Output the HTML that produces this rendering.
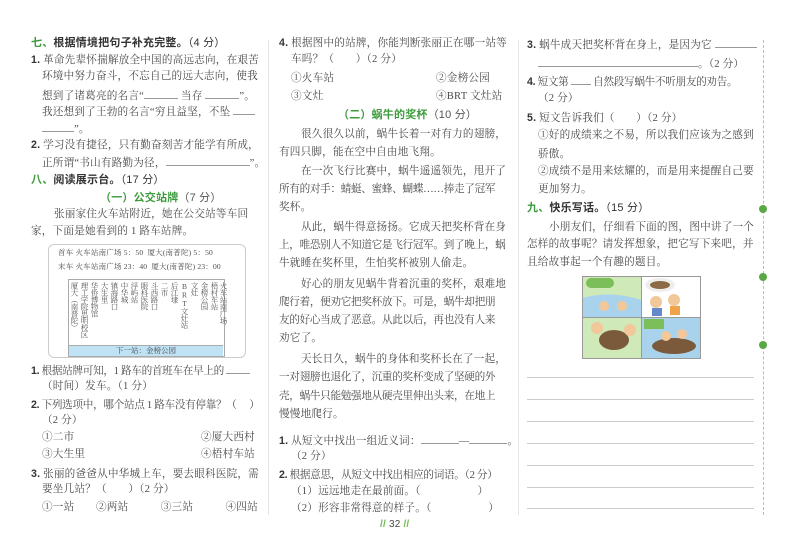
<!DOCTYPE html>
<html><head><meta charset="utf-8"><style>
html,body{margin:0;padding:0;background:#fff;}
body{width:800px;height:550px;position:relative;overflow:hidden;font-family:"Liberation Serif","Noto Serif CJK SC","Noto Sans CJK SC",serif;color:#4a4a4a;}
.t{position:absolute;font-size:10.6px;line-height:14px;white-space:nowrap;letter-spacing:0.2px;}
.k{letter-spacing:-0.3px;}
.h{font-family:"Liberation Sans","Noto Sans CJK SC",sans-serif;font-weight:bold;color:#333;font-size:11px;}
.g{color:#3d9b3d;}
.n{font-family:"Liberation Sans",sans-serif;font-weight:bold;color:#333;}
.u{display:inline-block;border-bottom:1px solid #999;height:10px;vertical-align:baseline;}
.ln{position:absolute;left:527px;width:227px;height:1px;background:#ccc;}
.vc{position:absolute;top:282px;writing-mode:vertical-rl;text-orientation:upright;font-size:7.5px;line-height:9px;color:#555;letter-spacing:-0.5px;}
</style></head><body>
<div style="position:absolute;left:268px;top:40px;width:1px;height:475px;background:#e4e4e4"></div>
<div style="position:absolute;left:518px;top:40px;width:1px;height:475px;background:#e4e4e4"></div>
<div style="position:absolute;left:763px;top:40px;width:0;height:475px;border-left:1px dashed #bbb"></div>
<div style="position:absolute;left:759px;top:205px;width:8px;height:8px;border-radius:50%;background:#5aa845"></div>
<div style="position:absolute;left:759px;top:273px;width:8px;height:8px;border-radius:50%;background:#5aa845"></div>
<div style="position:absolute;left:759px;top:341px;width:8px;height:8px;border-radius:50%;background:#5aa845"></div>

<!-- left column -->
<div class="t h" style="left:31px;top:36px"><span class="g">七、</span>根据情境把句子补充完整。<span style="font-weight:normal">（4 分）</span></div>
<div class="t" style="left:31px;top:53px"><span class="n">1.</span> 革命先辈怀揣解放全中国的高远志向，在艰苦</div>
<div class="t" style="left:42px;top:70px">环境中努力奋斗，不忘自己的远大志向，使我</div>
<div class="t" style="left:42px;top:88px">想到了诸葛亮的名言“<span class="u" style="width:34px"></span> 当存 <span class="u" style="width:34px"></span>”。</div>
<div class="t" style="left:42px;top:104px">我还想到了王勃的名言“穷且益坚，不坠 <span class="u" style="width:22px"></span></div>
<div class="t" style="left:42px;top:121px"><span class="u" style="width:32px"></span>”。</div>
<div class="t" style="left:31px;top:138px"><span class="n">2.</span> 学习没有捷径，只有勤奋刻苦才能学有所成，</div>
<div class="t" style="left:42px;top:155px">正所谓“书山有路勤为径，<span class="u" style="width:84px"></span>”。</div>
<div class="t h" style="left:31px;top:173px"><span class="g">八、</span>阅读展示台。<span style="font-weight:normal">（17 分）</span></div>
<div class="t h" style="left:100px;top:191px;color:#3d9b3d">（一）公交站牌<span style="font-weight:normal;color:#555">（7 分）</span></div>
<div class="t" style="left:54px;top:208px">张丽家住火车站附近，她在公交站等车回</div>
<div class="t" style="left:31px;top:225px">家，下面是她看到的 1 路车站牌。</div>
<div style="position:absolute;left:48px;top:244px;width:196px;height:112px;border:1px solid #ccc;border-radius:6px"></div>
<div class="t" style="left:58px;top:246px;font-size:7.5px">首车 火车站南广场 5：50 &nbsp;厦大(南普陀) 5：50</div>
<div class="t" style="left:58px;top:260px;font-size:7.5px">末车 火车站南广场 23：40 &nbsp;厦大(南普陀) 23：00</div>
<div style="position:absolute;left:68px;top:279px;width:155px;height:76px;border:1px solid #aaa"></div>
<div style="position:absolute;left:69px;top:345px;width:154px;height:10px;background:#bfe2f5;border-top:1px solid #aaa;font-size:7.5px;line-height:10px;text-align:center;color:#444">下一站：金榜公园</div>
<div class="vc" style="left:70px">厦大︵南普陀︶</div>
<div class="vc" style="left:80px">理工学院思明校区</div>
<div class="vc" style="left:90px">华侨博物馆</div>
<div class="vc" style="left:100px">大生里</div>
<div class="vc" style="left:110px">镇海路口</div>
<div class="vc" style="left:120px">中华城</div>
<div class="vc" style="left:130px">浮屿站</div>
<div class="vc" style="left:140px">眼科医院</div>
<div class="vc" style="left:150px">斗西路口</div>
<div class="vc" style="left:160px">二市</div>
<div class="vc" style="left:170px">后江埭</div>
<div class="vc" style="left:180px">BRT文灶站</div>
<div class="vc" style="left:190px">文灶</div>
<div class="vc" style="left:200px">金榜公园</div>
<div class="vc" style="left:210px">梧村车站</div>
<div class="vc" style="left:219px">火车站南广场</div>
<div class="t k" style="left:31px;top:363px"><span class="n">1.</span> 根据站牌可知，1 路车的首班车在早上的 <span class="u" style="width:24px"></span></div>
<div class="t" style="left:42px;top:380px">（时间）发车。（1 分）</div>
<div class="t k" style="left:31px;top:398px"><span class="n">2.</span> 下列选项中，哪个站点 1 路车没有停靠？（　 ）</div>
<div class="t" style="left:42px;top:414px">（2 分）</div>
<div class="t" style="left:42px;top:431px">①二市</div>
<div class="t" style="left:201px;top:431px">②厦大西村</div>
<div class="t" style="left:42px;top:448px">③大生里</div>
<div class="t" style="left:201px;top:448px">④梧村车站</div>
<div class="t" style="left:31px;top:467px"><span class="n">3.</span> 张丽的爸爸从中华城上车，要去眼科医院，需</div>
<div class="t" style="left:42px;top:483px">要坐几站？（　　）（2 分）</div>
<div class="t" style="left:42px;top:501px">①一站　　②两站　　　③三站　　　④四站</div>

<!-- middle column -->
<div class="t" style="left:279px;top:36px"><span class="n">4.</span> 根据图中的站牌，你能判断张丽正在哪一站等</div>
<div class="t" style="left:291px;top:53px">车吗？（　　）（2 分）</div>
<div class="t" style="left:291px;top:72px">①火车站</div>
<div class="t" style="left:436px;top:72px">②金榜公园</div>
<div class="t" style="left:291px;top:90px">③文灶</div>
<div class="t" style="left:436px;top:90px">④BRT 文灶站</div>
<div class="t h" style="left:338px;top:108px;color:#3d9b3d">（二）蜗牛的奖杯<span style="font-weight:normal;color:#555">（10 分）</span></div>
<div class="t" style="left:301px;top:128px">很久很久以前，蜗牛长着一对有力的翅膀，</div>
<div class="t" style="left:279px;top:146px">有四只脚，能在空中自由地飞翔。</div>
<div class="t" style="left:301px;top:165px">在一次飞行比赛中，蜗牛遥遥领先，甩开了</div>
<div class="t k" style="left:279px;top:183px">所有的对手：蜻蜓、蜜蜂、蝴蝶……捧走了冠军</div>
<div class="t" style="left:279px;top:201px">奖杯。</div>
<div class="t" style="left:301px;top:221px">从此，蜗牛得意扬扬。它成天把奖杯背在身</div>
<div class="t k" style="left:279px;top:239px">上，唯恐别人不知道它是飞行冠军。到了晚上，蜗</div>
<div class="t" style="left:279px;top:257px">牛就睡在奖杯里，生怕奖杯被别人偷走。</div>
<div class="t" style="left:301px;top:278px">好心的朋友见蜗牛背着沉重的奖杯，艰难地</div>
<div class="t k" style="left:279px;top:296px">爬行着，便劝它把奖杯放下。可是，蜗牛却把朋</div>
<div class="t k" style="left:279px;top:314px">友的好心当成了恶意。从此以后，再也没有人来</div>
<div class="t" style="left:279px;top:332px">劝它了。</div>
<div class="t" style="left:301px;top:353px">天长日久，蜗牛的身体和奖杯长在了一起，</div>
<div class="t k" style="left:279px;top:371px">一对翅膀也退化了，沉重的奖杯变成了坚硬的外</div>
<div class="t k" style="left:279px;top:390px">壳，蜗牛只能勉强地从硬壳里伸出头来，在地上</div>
<div class="t" style="left:279px;top:408px">慢慢地爬行。</div>
<div class="t" style="left:279px;top:433px"><span class="n">1.</span> 从短文中找出一组近义词：<span class="u" style="width:38px"></span>—<span class="u" style="width:38px"></span>。</div>
<div class="t" style="left:291px;top:450px">（2 分）</div>
<div class="t k" style="left:279px;top:468px"><span class="n">2.</span> 根据意思，从短文中找出相应的词语。（2 分）</div>
<div class="t" style="left:291px;top:485px">（1）远远地走在最前面。（　　　　　 ）</div>
<div class="t" style="left:291px;top:502px">（2）形容非常得意的样子。（　　　　　 ）</div>
<div class="t" style="left:380px;top:518px;font-family:'Liberation Sans',sans-serif;font-size:10px"><span style="color:#6abf4b;font-weight:bold">//</span> 32 <span style="color:#6abf4b;font-weight:bold">//</span></div>

<!-- right column -->
<div class="t" style="left:527px;top:37px"><span class="n">3.</span> 蜗牛成天把奖杯背在身上，是因为它 <span class="u" style="width:42px"></span></div>
<div class="t" style="left:538px;top:56px"><span class="u" style="width:160px"></span>。（2 分）</div>
<div class="t k" style="left:527px;top:74px"><span class="n">4.</span> 短文第 <span class="u" style="width:20px"></span> 自然段写蜗牛不听朋友的劝告。</div>
<div class="t" style="left:538px;top:92px">（2 分）</div>
<div class="t" style="left:527px;top:111px"><span class="n">5.</span> 短文告诉我们（　　）（2 分）</div>
<div class="t" style="left:538px;top:129px">①好的成绩来之不易，所以我们应该为之感到</div>
<div class="t" style="left:538px;top:148px">骄傲。</div>
<div class="t" style="left:538px;top:165px">②成绩不是用来炫耀的，而是用来提醒自己要</div>
<div class="t" style="left:538px;top:183px">更加努力。</div>
<div class="t h" style="left:527px;top:201px"><span class="g">九、</span>快乐写话。<span style="font-weight:normal">（15 分）</span></div>
<div class="t" style="left:549px;top:221px">小朋友们，仔细看下面的图，图中讲了一个</div>
<div class="t" style="left:527px;top:238px">怎样的故事呢？请发挥想象，把它写下来吧，并</div>
<div class="t" style="left:527px;top:256px">且给故事起一个有趣的题目。</div>
<svg style="position:absolute;left:582px;top:276px" width="119" height="83" viewBox="0 0 119 83">
<rect x="0" y="0" width="59" height="41" fill="#cfe9b8"/><path d="M0 22 Q30 14 59 24 L59 41 L0 41Z" fill="#a9d3ec"/><rect x="4" y="2" width="28" height="10" rx="5" fill="#7cbf5a"/>
<circle cx="22" cy="30" r="5" fill="#f2c79a"/><circle cx="40" cy="30" r="5" fill="#f2c79a"/>
<rect x="60" y="0" width="59" height="41" fill="#fff"/><ellipse cx="78" cy="9" rx="15" ry="7" fill="#eee"/><ellipse cx="78" cy="9" rx="10" ry="4" fill="#8c6a45"/>
<circle cx="74" cy="26" r="6" fill="#f2c79a"/><circle cx="92" cy="24" r="6" fill="#f2c79a"/><rect x="70" y="32" width="10" height="8" fill="#6688cc"/><rect x="88" y="30" width="10" height="9" fill="#f0a34a"/>
<rect x="0" y="42" width="59" height="41" fill="#cfe9b8"/><ellipse cx="32" cy="64" rx="15" ry="10" fill="#7a5a3a"/><circle cx="15" cy="52" r="6" fill="#f2c79a"/><circle cx="48" cy="54" r="6" fill="#f2c79a"/>
<rect x="60" y="42" width="59" height="41" fill="#a9d3ec"/><rect x="62" y="43" width="20" height="10" fill="#7cbf5a"/><ellipse cx="92" cy="70" rx="22" ry="8" fill="#7a5a3a"/><circle cx="84" cy="60" r="5" fill="#f2c79a"/><circle cx="100" cy="58" r="5" fill="#f2c79a"/>
<rect x="0.5" y="0.5" width="118" height="82" fill="none" stroke="#999"/><line x1="59.5" y1="0" x2="59.5" y2="83" stroke="#999"/><line x1="0" y1="41.5" x2="119" y2="41.5" stroke="#999"/>
</svg>
<div class="ln" style="top:377px"></div>
<div class="ln" style="top:399px"></div>
<div class="ln" style="top:421px"></div>
<div class="ln" style="top:443px"></div>
<div class="ln" style="top:465px"></div>
<div class="ln" style="top:487px"></div>
<div class="ln" style="top:508px"></div>
</body></html>
